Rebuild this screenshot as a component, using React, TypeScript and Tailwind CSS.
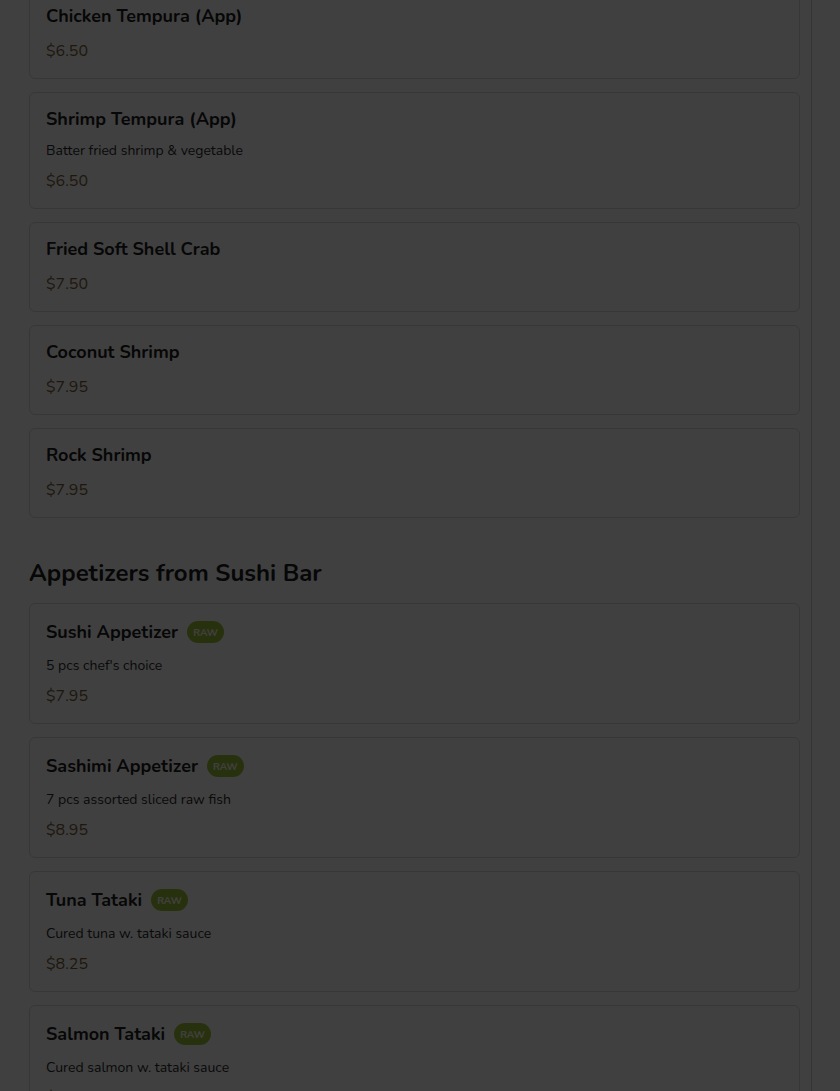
type Item = {
  name: string;
  desc?: string;
  price: string;
  raw?: boolean;
};

const hotItems: Item[] = [
  { name: "Chicken Tempura (App)", price: "$6.50" },
  { name: "Shrimp Tempura (App)", desc: "Batter fried shrimp & vegetable", price: "$6.50" },
  { name: "Fried Soft Shell Crab", price: "$7.50" },
  { name: "Coconut Shrimp", price: "$7.95" },
  { name: "Rock Shrimp", price: "$7.95" },
];

const sushiItems: Item[] = [
  { name: "Sushi Appetizer", desc: "5 pcs chef's choice", price: "$7.95", raw: true },
  { name: "Sashimi Appetizer", desc: "7 pcs assorted sliced raw fish", price: "$8.95", raw: true },
  { name: "Tuna Tataki", desc: "Cured tuna w. tataki sauce", price: "$8.25", raw: true },
  { name: "Salmon Tataki", desc: "Cured salmon w. tataki sauce", price: "$8.25", raw: true },
];

function MenuCard({ item }: { item: Item }) {
  return (
    <div className="rounded-md border border-[#dadada] bg-white px-4 py-[15px]">
      <div className={item.raw ? "flex min-h-[26px] items-center" : "flex items-center"}>
        <h3 className="text-[18px] font-bold leading-[22px] text-[#1c1c1c]">{item.name}</h3>
        {item.raw && (
          <span className="ml-[9px] flex h-[22px] items-center rounded-full bg-[#a0c236] px-[6px] pt-px text-[10px] font-bold leading-none text-white">
            RAW
          </span>
        )}
      </div>
      {item.desc && (
        <p className="mt-[11px] text-[14px] leading-5 text-[#2a2a2a]">{item.desc}</p>
      )}
      <div className={item.desc ? "mt-2 text-[16px] leading-6 text-[#7d5e3a]" : "mt-3 text-[16px] leading-6 text-[#7d5e3a]"}>
        {item.price}
      </div>
    </div>
  );
}

export default function App() {
  return (
    <div className="relative min-h-screen overflow-hidden bg-white font-['Nunito','Noto_Sans',sans-serif]">
      <div className="w-[812px] border-r border-[#d4d4d4] pl-[29px] pr-[11px] pb-10">
        <div className="-mt-[11px] flex flex-col gap-[13px]">
          {hotItems.map((item) => (
            <MenuCard key={item.name} item={item} />
          ))}
        </div>

        <h2 className="mt-[39px] text-[24px] font-bold leading-8 text-[#1c1c1c]">
          Appetizers from Sushi Bar
        </h2>

        <div className="mt-[14px] flex flex-col gap-[13px]">
          {sushiItems.map((item) => (
            <MenuCard key={item.name} item={item} />
          ))}
        </div>
      </div>

      <div className="fixed inset-0 bg-black/75" />
    </div>
  );
}
